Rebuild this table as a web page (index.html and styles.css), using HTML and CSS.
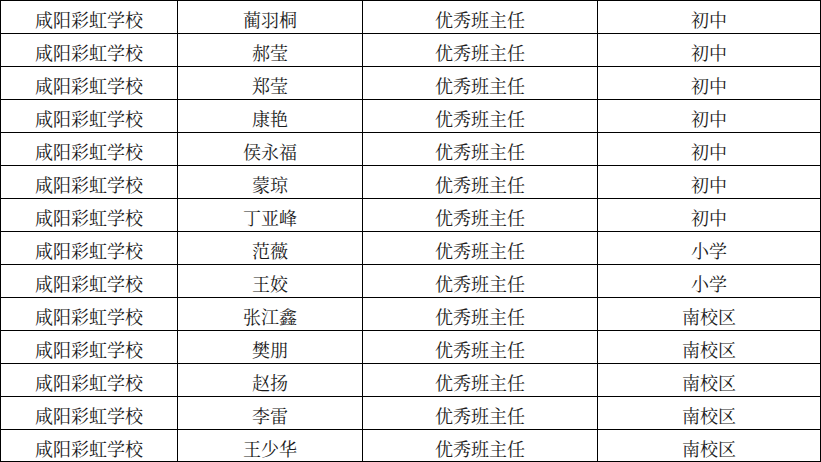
FILE: index.html
```html
<!DOCTYPE html>
<html lang="zh">
<head>
<meta charset="utf-8">
<link rel="stylesheet" href="styles.css">
</head>
<body>
<div class="table">
  <div class="cell">咸阳彩虹学校</div><div class="cell">蔺羽桐</div><div class="cell">优秀班主任</div><div class="cell">初中</div>
  <div class="cell">咸阳彩虹学校</div><div class="cell">郝莹</div><div class="cell">优秀班主任</div><div class="cell">初中</div>
  <div class="cell">咸阳彩虹学校</div><div class="cell">郑莹</div><div class="cell">优秀班主任</div><div class="cell">初中</div>
  <div class="cell">咸阳彩虹学校</div><div class="cell">康艳</div><div class="cell">优秀班主任</div><div class="cell">初中</div>
  <div class="cell">咸阳彩虹学校</div><div class="cell">侯永福</div><div class="cell">优秀班主任</div><div class="cell">初中</div>
  <div class="cell">咸阳彩虹学校</div><div class="cell">蒙琼</div><div class="cell">优秀班主任</div><div class="cell">初中</div>
  <div class="cell">咸阳彩虹学校</div><div class="cell">丁亚峰</div><div class="cell">优秀班主任</div><div class="cell">初中</div>
  <div class="cell">咸阳彩虹学校</div><div class="cell">范薇</div><div class="cell">优秀班主任</div><div class="cell">小学</div>
  <div class="cell">咸阳彩虹学校</div><div class="cell">王姣</div><div class="cell">优秀班主任</div><div class="cell">小学</div>
  <div class="cell">咸阳彩虹学校</div><div class="cell">张江鑫</div><div class="cell">优秀班主任</div><div class="cell">南校区</div>
  <div class="cell">咸阳彩虹学校</div><div class="cell">樊朋</div><div class="cell">优秀班主任</div><div class="cell">南校区</div>
  <div class="cell">咸阳彩虹学校</div><div class="cell">赵扬</div><div class="cell">优秀班主任</div><div class="cell">南校区</div>
  <div class="cell">咸阳彩虹学校</div><div class="cell">李雷</div><div class="cell">优秀班主任</div><div class="cell">南校区</div>
  <div class="cell">咸阳彩虹学校</div><div class="cell">王少华</div><div class="cell">优秀班主任</div><div class="cell">南校区</div>
</div>
</body>
</html>
```
FILE: styles.css
```css
html, body {
  margin: 0;
  padding: 0;
  background: #fff;
  overflow: hidden;
}
.table {
  display: grid;
  grid-template-columns: 176px 184px 234px 222px;
  grid-template-rows: repeat(13, 32px) 31px;
  gap: 1px;
  padding: 1px;
  background: #000;
  width: max-content;
  font-family: "Noto Serif CJK SC", "Liberation Serif", "Noto Sans CJK SC", serif;
  font-size: 18px;
  color: #1a1a1a;
}
.cell {
  background: #fff;
  display: flex;
  align-items: center;
  justify-content: center;
  padding-top: 4px;
  box-sizing: border-box;
  line-height: 1;
}
```
